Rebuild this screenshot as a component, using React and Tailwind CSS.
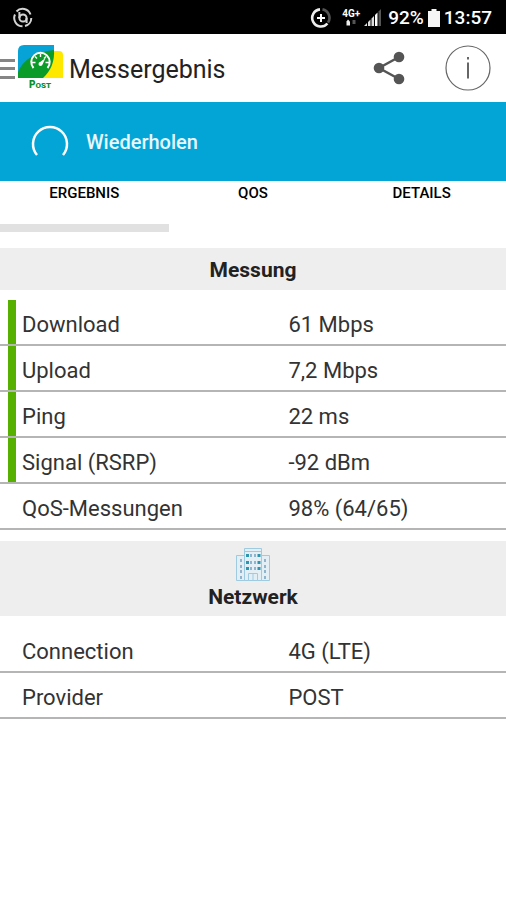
const measurements = [
  { label: 'Download', value: '61 Mbps', rated: true },
  { label: 'Upload', value: '7,2 Mbps', rated: true },
  { label: 'Ping', value: '22 ms', rated: true },
  { label: 'Signal (RSRP)', value: '-92 dBm', rated: true },
  { label: 'QoS-Messungen', value: '98% (64/65)', rated: false },
];

const network = [
  { label: 'Connection', value: '4G (LTE)', rated: false },
  { label: 'Provider', value: 'POST', rated: false },
];

const tabs = ['ERGEBNIS', 'QOS', 'DETAILS'];

const StatusBar = () => (
  <div className="flex h-[34px] items-center bg-black pl-3 pr-[14px] pt-[2px] text-white">
    <svg width="22" height="22" viewBox="0 0 22 22" fill="none" stroke="#d4d4d4" strokeWidth="2">
      <path d="M4.500 4.500A8.300 8.300 0 0 1 18.500 7.500M19.300 11A8.300 8.300 0 0 1 13 19M10.500 19.300A8.300 8.300 0 0 1 3 7.500" />
      <circle cx="11" cy="11" r="3.600" />
      <path d="M7.400 5v6M14.600 11v5" />
    </svg>
    <div className="ml-auto flex items-center">
      <svg width="22" height="22" viewBox="0 0 22 22" fill="none" strokeWidth="2.6">
        <path d="M12.5 2.4A8.6 8.6 0 0 1 18 15.6" stroke="#555" />
        <path d="M10 2.4A8.6 8.6 0 1 0 17.4 16.5" stroke="#eee" />
        <path d="M11 7v8M7 11h8" stroke="#fff" strokeWidth="2" />
      </svg>
      <div className="ml-2 flex w-[22px] flex-col items-center">
        <span className="text-[10px] font-bold leading-[10px]">4G+</span>
        <svg width="12" height="8" viewBox="0 0 12 8">
          <path d="M3 .500l2 2V6.500H1.500V2.500z" fill="#eee" />
          <path d="M7.500 1h3v4h-3z" fill="#555" />
        </svg>
      </div>
      <svg className="ml-[2px]" width="18" height="18" viewBox="0 0 18 18">
        <path d="M0 17l3-3v3zM4 13l2.500-2.500V17H4zM7.500 9.500l2.500-2.500V17H7.500z" fill="#ddd" />
        <path d="M11 6l2.500-2.500V17H11z" fill="#fff" />
        <path d="M14.500 2.500l2.500-2.500V17h-2.500z" fill="#555" />
      </svg>
      <span className="ml-[6px] text-[19px] font-medium leading-6">92%</span>
      <svg className="ml-1" width="12" height="18" viewBox="0 0 12 18" fill="#f5f5f5">
        <path d="M3.500 0h5v2H12v16H0V2h3.500z" />
      </svg>
      <span className="ml-1 text-[19px] font-medium leading-6">13:57</span>
    </div>
  </div>
);

const Logo = () => (
  <svg width="46" height="46" viewBox="0 0 46 46">
    <path d="M34 6h7q4 0 4 4v23H22z" fill="#ffe800" />
    <path d="M6 0h30v8L2 33H0V6q0-6 6-6z" fill="#08a3d6" />
    <path d="M36 5Q37 22 25 33H0V27Q8 8 36 5z" fill="#0b9b28" />
    <path d="M15.500 23a9.200 9.200 0 1 1 14 0" fill="none" stroke="#fff" strokeWidth="2" />
    <path
      d="M14 17.500h3.500M17 11.500l2 2M22.500 9v3M28 11.500l-2 2M31 17.500h-3.500"
      stroke="#fff"
      strokeWidth="1.400"
    />
    <path d="M27.500 13l-3 6.500-3-2z" fill="#fff" />
    <circle cx="22.500" cy="19" r="2" fill="#fff" />
    <text
      x="22"
      y="43"
      textAnchor="middle"
      fontFamily="Roboto, sans-serif"
      fontWeight="900"
      fontSize="10"
      fill="#0b8f2c"
    >
      P<tspan fontSize="8">OST</tspan>
    </text>
  </svg>
);

const Header = () => (
  <header className="flex h-[68px] items-center bg-white pr-[15px]">
    <button type="button" aria-label="Menü" className="flex items-center">
      <svg width="15" height="22" viewBox="0 0 15 22" fill="#858585">
        <path d="M0 2h15v3H0zM0 10h15v3H0zM0 19h15v3H0z" />
      </svg>
    </button>
    <div className="ml-[3px]">
      <Logo />
    </div>
    <h1 className="ml-[5px] pt-1 text-[25px] leading-8 text-[#222]">Messergebnis</h1>
    <button type="button" aria-label="Teilen" className="ml-auto">
      <svg width="32" height="34" viewBox="0 0 32 34" fill="#555">
        <path d="M26 6L6 17l20 11" fill="none" stroke="#555" strokeWidth="2.500" />
        <circle cx="26" cy="6" r="5.300" />
        <circle cx="6" cy="17" r="5.300" />
        <circle cx="26" cy="28" r="5.300" />
      </svg>
    </button>
    <button type="button" aria-label="Info" className="ml-10">
      <svg width="46" height="46" viewBox="0 0 46 46" fill="none" stroke="#666">
        <circle cx="23" cy="23" r="22" strokeWidth="1.200" />
        <path d="M23 17.500v16M23 12v2.500" strokeWidth="2" />
      </svg>
    </button>
  </header>
);

const BuildingIcon = () => (
  <svg width="36" height="36" viewBox="0 0 36 36" fill="#e3eff5" stroke="#9fcbe0">
    <path d="M1.500 8.500h9v25h-9zM25.500 8.500h9v25h-9z" />
    <path d="M9.500 1.500h17v32h-17z" />
    <path d="M13.500 26.500h9v7h-9zM18 27v6M9 4.500h18" />
    <path
      d="M11 7h3v3h-3zM22.500 7h3v3h-3zM11 14h3v3h-3zM22.500 14h3v3h-3zM11 20h3v3h-3zM22.500 20h3v3h-3z"
      fill="#2f94ae"
      stroke="none"
    />
    <path
      d="M15 7h2v3h-2zM19 7h2v3h-2zM15 14h2v3h-2zM19 14h2v3h-2zM15 20h2v3h-2zM19 20h2v3h-2zM5 12h2v3H5zM5 18h2v3H5zM5 23h2v3H5zM5 29h2v3H5zM29 12h2v3h-2zM29 18h2v3h-2zM29 23h2v3h-2zM29 29h2v3h-2z"
      fill="#8fb4cb"
      stroke="none"
    />
  </svg>
);

const ResultTable = ({ label, rows }) => (
  <table
    aria-label={label}
    className="w-full table-fixed border-separate border-spacing-0 text-[22px] leading-7 text-[#333]"
  >
    <colgroup>
      <col className="w-4" />
      <col />
      <col className="w-[43%]" />
    </colgroup>
    <tbody>
      {rows.map((row) => (
        <tr key={row.label}>
          <td className="border-b-2 border-[#b5b5b5] p-0 pl-2">
            <div className={`h-11 w-2 ${row.rated ? 'bg-[#55b000]' : ''}`} />
          </td>
          <th scope="row" className="border-b-2 border-[#b5b5b5] p-0 pl-[6px] pt-[6px] text-left font-normal">
            {row.label}
          </th>
          <td className="border-b-2 border-[#b5b5b5] p-0 pt-[6px]">{row.value}</td>
        </tr>
      ))}
    </tbody>
  </table>
);

const App = () => (
  <div className="min-h-screen bg-white font-['Roboto',sans-serif]">
    <StatusBar />
    <Header />

    <button
      type="button"
      className="flex h-[79px] w-full items-center bg-[#03a5d7] pl-[31px] text-left text-[20px] font-medium leading-6 text-[#eaf7fc]"
    >
      <svg width="38" height="38" viewBox="0 0 38 38" fill="none" stroke="#fff" strokeWidth="2.500">
        <path d="M6 32A17 17 0 1 1 32 32" />
      </svg>
      <span className="ml-[17px]">Wiederholen</span>
    </button>

    {/* Tabs */}
    <nav className="grid grid-cols-3">
      {tabs.map((tab, index) => (
        <button
          key={tab}
          type="button"
          className={`flex h-[51px] items-start justify-center border-b-8 pt-[2px] text-[15px] font-medium leading-5 text-black ${
            index === 0 ? 'border-[#e1e1e1]' : 'border-transparent'
          }`}
        >
          {tab}
        </button>
      ))}
    </nav>

    <section className="mt-4">
      <h2 className="mb-[10px] bg-[#eee] pb-[6px] pt-2 text-center text-[21px] font-bold leading-7 text-[#222]">
        Messung
      </h2>
      <ResultTable label="Messung" rows={measurements} />
    </section>

    <section className="mt-[11px]">
      <div className="mb-[11px] flex flex-col items-center bg-[#eee] pb-[5px] pt-[6px]">
        <BuildingIcon />
        <h2 className="text-[21px] font-bold leading-7 text-[#222]">Netzwerk</h2>
      </div>
      <ResultTable label="Netzwerk" rows={network} />
    </section>
  </div>
);

export default App;
